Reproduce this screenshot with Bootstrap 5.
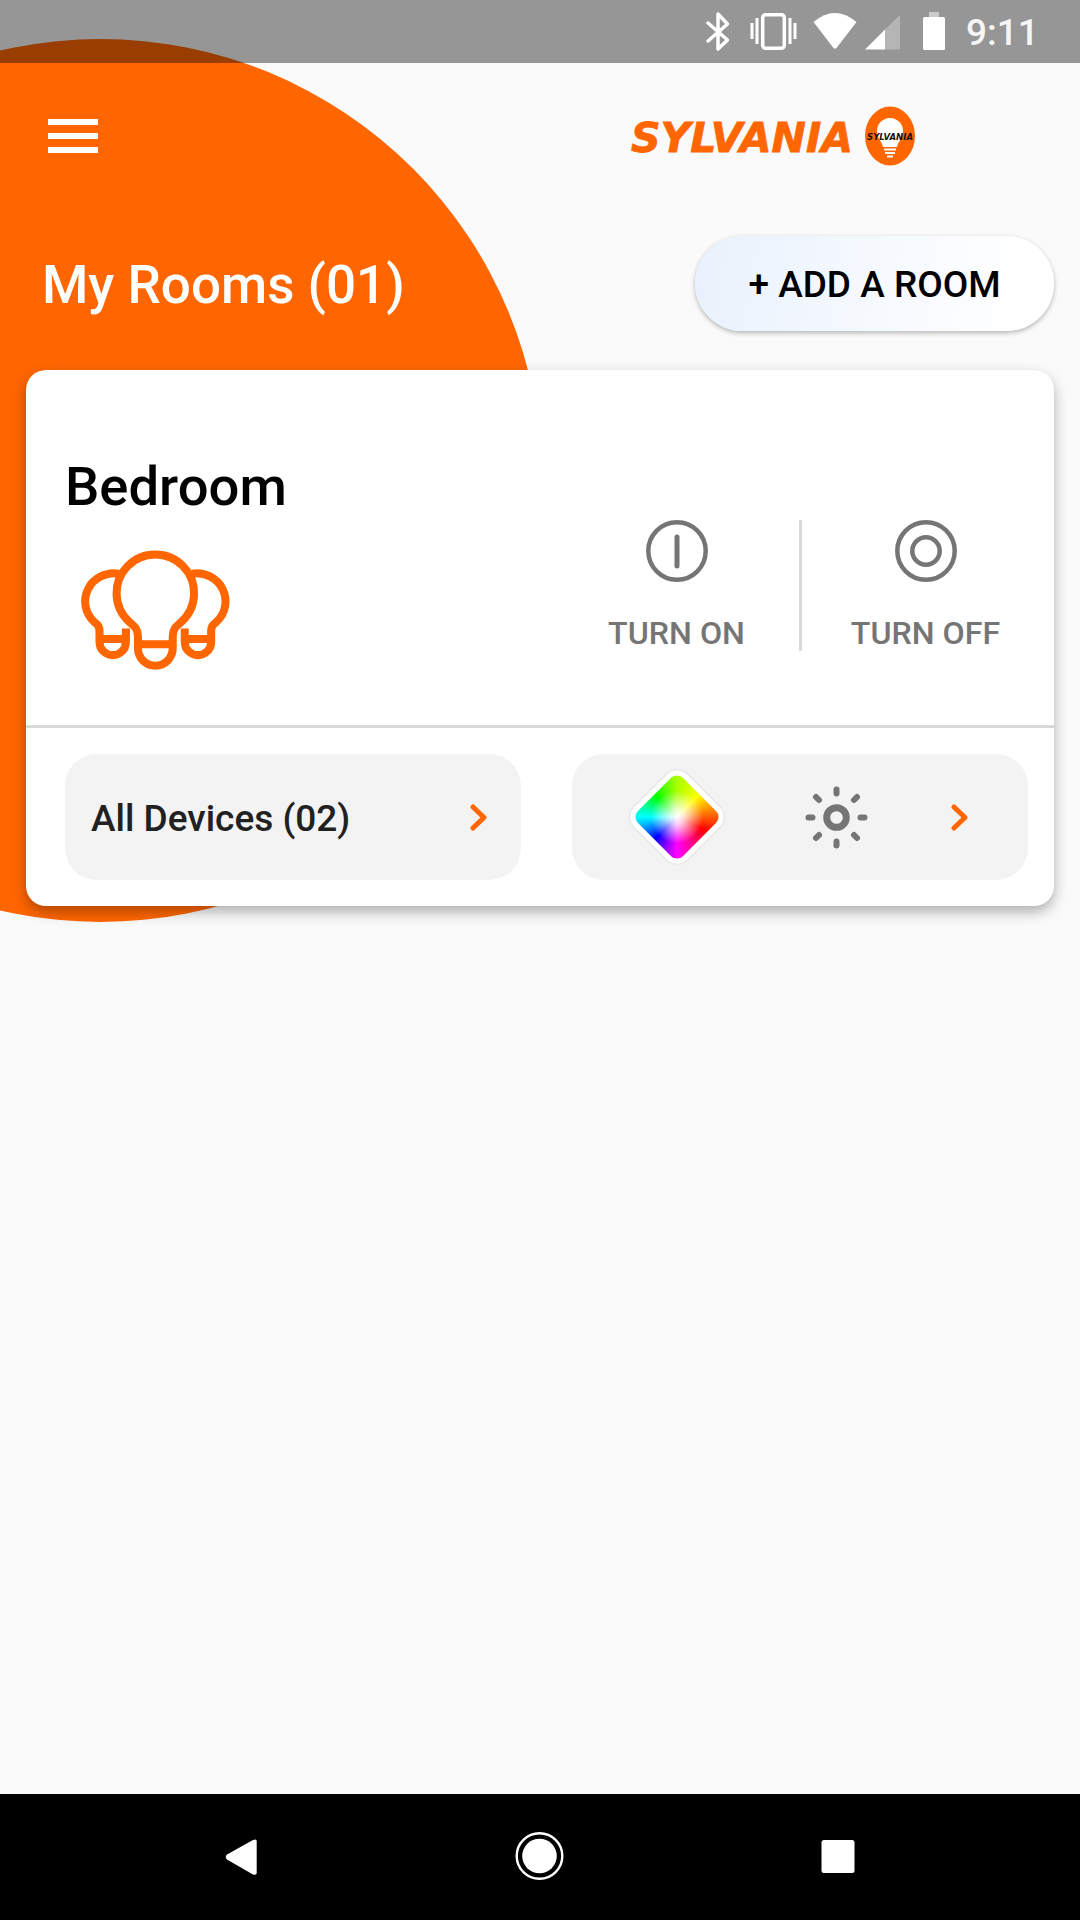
<!DOCTYPE html>
<html>
<head>
  <title>My Rooms</title>
  <meta charset="UTF-8">
  <link href="https://cdn.jsdelivr.net/npm/bootstrap@5.3.0/dist/css/bootstrap.min.css" rel="stylesheet">
  <style>
    body { background: #fafafa; font-family: Roboto, "Liberation Sans", sans-serif; }
    .phone { position: relative; width: 1080px; height: 1920px; overflow: hidden; background: #fafafa; }
    .blob { position: absolute; left: -341.5px; top: 38.5px; width: 883px; height: 883px; border-radius: 50%; background: #ff6600; }
    .status-strip { position: relative; height: 63px; background: rgba(0,0,0,.4); color: #fff; padding-right: 47px; }
    .status-strip svg { height: 63px; display: block; }
    .clock { font-size: 37px; font-weight: 500; line-height: 66px; width: 67px; margin-left: 21px; color: #f6f6f6; white-space: nowrap; }
    .page-main { position: relative; }
    .top-row { height: 173px; }
    .burger { width: 49.5px; margin: 56px 0 0 48px; }
    .burger span { display: block; height: 5.5px; background: #fff; margin-bottom: 8.6px; }
    .brand { margin: 42px 155px 0 0; }
    .title-row { height: 95px; padding: 0 26px 0 42px; }
    .room-title { font-size: 53px; font-weight: 500; color: #fff; margin: 0; line-height: 1; padding-top: 3px; }
    .add-btn { width: 359px; height: 95px; border-radius: 48px; border: 0; background: linear-gradient(100deg, #e8f1fc 0%, #f2f7fe 35%, #ffffff 90%); box-shadow: 0 2px 5px rgba(0,0,0,.28); font-size: 37px; font-weight: 500; color: #000; padding: 2px 0 0; }
    .room-card { margin: 39px 26px 0; height: 536px; border: 0; border-radius: 20px; box-shadow: 0 6px 14px rgba(0,0,0,.3); }
    .card-top { height: 358px; border-bottom: 3px solid #d9d9d9; padding-right: 5px; }
    .room-name { font-size: 54.4px; font-weight: 500; color: #000; line-height: 1; margin: 0 0 0 39px; padding-top: 90px; }
    .bulbs { display: block; margin: 36px 0 0 53px; }
    .acts { padding-top: 150px; }
    .act { width: 245px; color: #757575; font-size: 32.2px; font-weight: 500; text-align: center; height: 131px; white-space: nowrap; }
    .act + .act { border-left: 3px solid #d9d9d9; width: 250px; }
    .act svg { display: block; margin: 0 auto 32px; }
    .act div { line-height: 1.2; }
    .card-bottom { padding: 26px 26px 0 39px; gap: 51px; }
    .pill-box { width: 456px; height: 126px; border-radius: 32px; background: #f3f3f3; }
    .pill-left { padding: 0 34px 0 26px; font-size: 37px; font-weight: 500; color: #212121; }
    .pill-left span { padding-top: 3px; }
    .swatch-wrap { width: 93px; height: 93px; margin-left: 58px; display: flex; align-items: center; justify-content: center; }
    .swatch { width: 74px; height: 74px; flex: none; border-radius: 14px; border: 5px solid #fff; transform: rotate(45deg); box-shadow: 0 0 3px rgba(0,0,0,.15); background: radial-gradient(circle, #fff 0%, rgba(255,255,255,.8) 16%, rgba(255,255,255,0) 58%), conic-gradient(from -45deg, #a8ff00 0deg, #ffff00 45deg, #ff0000 115deg, #ff00ff 180deg, #0000ff 225deg, #00ffff 270deg, #00ff00 315deg, #a8ff00 360deg); }
    .sun { margin-right: 83px; }
    .nav-strip { position: absolute; left: 0; right: 0; bottom: 0; height: 126px; background: #000; }
    .nav-strip svg { display: block; }
  </style>
</head>
<body>
<div class="phone">
  <div class="blob"></div>

  <!-- Status bar -->
  <div class="status-strip d-flex justify-content-end">
    <svg width="23" viewBox="706 0 23 63"><path d="M708 23 L727.500 40 L718 49 V14 L727.500 24 L708 41" fill="none" stroke="#fff" stroke-width="3.500" stroke-linecap="round" stroke-linejoin="round"/></svg>
    <svg width="47" viewBox="750 0 47 63" style="margin-left:21px"><rect x="762.700" y="14.700" width="21.600" height="33.600" rx="3" fill="none" stroke="#fff" stroke-width="3.500"/><path d="M752 23V39M757 18V44M790 18V44M795 23V39" stroke="#fff" stroke-width="3" fill="none"/></svg>
    <svg width="44" viewBox="813 0 44 63" style="margin-left:16px"><path d="M813.500 22 Q835 4 856.500 22 L836.500 48 Q835 49.500 833.500 48 Z" fill="#fff"/></svg>
    <svg width="35" viewBox="865 0 35 63" style="margin-left:8px"><polygon points="865,49.500 885,29.500 885,49.500" fill="#fff"/><polygon points="885,29.500 900,15 900,49.500 885,49.500" fill="#fff" fill-opacity=".3"/></svg>
    <svg width="22" viewBox="923 0 22 63" style="margin-left:23px"><path d="M929 17V12H939V17Z" fill="#fff" fill-opacity=".5"/><rect x="923" y="17" width="22" height="33" rx="1.500" fill="#fff"/></svg>
    <div class="clock text-end">9:11</div>
  </div>

  <div class="page-main">
    <!-- Menu and logo -->
    <div class="top-row d-flex justify-content-between">
      <div class="burger"><span></span><span></span><span></span></div>
      <svg class="brand" width="300" height="62" viewBox="625 105 300 62">
        <text x="631" y="152" font-family="DejaVu Sans" font-weight="700" font-style="italic" font-size="40" fill="#ff6600" stroke="#ff6600" stroke-width=".8" textLength="222" lengthAdjust="spacingAndGlyphs">SYLVANIA</text>
        <ellipse cx="890" cy="136" rx="25" ry="29.500" fill="#ff6600"/>
        <path d="M883 147 C882 141 877 139 877 131 A13 13 0 0 1 903 131 C903 139 898 141 897 147 Z" fill="#fff"/>
        <path d="M884 149.500H896M885 153H895M887 156.500H893" stroke="#fff" stroke-width="2"/>
        <text x="867" y="140" font-family="DejaVu Sans" font-weight="700" font-style="italic" font-size="8.500" fill="#111" textLength="46" lengthAdjust="spacingAndGlyphs">SYLVANIA</text>
      </svg>
    </div>

    <div class="title-row d-flex justify-content-between align-items-center">
      <h1 class="room-title">My Rooms (01)</h1>
      <button class="btn add-btn">+ ADD A ROOM</button>
    </div>

    <!-- Room card -->
    <div class="card room-card">
      <div class="card-top d-flex justify-content-between">
        <div>
          <h2 class="room-name">Bedroom</h2>
          <svg class="bulbs" width="154" height="122" viewBox="120 330 460 365" fill="none" stroke="#ff6600" stroke-width="24" stroke-linejoin="round">
            <path d="M296 624 V590 C296 565 285 558 270 545 A116 116 0 1 1 426 545 C411 558 400 565 400 590 V624 A52 52 0 0 1 296 624 Z M296 612 H400"/>
            <path d="M238 401 A86 84 0 0 0 165 545 C178 555 181 560 181 575 V605 A39.500 39.500 0 0 0 260 605 V565 M181 596 H260"/>
            <path d="M458 401 A86 84 0 0 1 531 545 C518 555 515 560 515 575 V605 A39.500 39.500 0 0 1 436 605 V565 M515 596 H436"/>
          </svg>
        </div>
        <div class="acts d-flex">
          <div class="act">
            <svg width="62" height="62" viewBox="0 0 62 62" fill="none" stroke="#757575" stroke-width="4.500"><circle cx="31" cy="31" r="28.700"/><path d="M31 17V46" stroke-width="5" stroke-linecap="round"/></svg>
            <div>TURN ON</div>
          </div>
          <div class="act">
            <svg width="62" height="62" viewBox="0 0 62 62" fill="none" stroke="#757575" stroke-width="4.500"><circle cx="31" cy="31" r="28.700"/><circle cx="31" cy="31" r="13.700"/></svg>
            <div>TURN OFF</div>
          </div>
        </div>
      </div>
      <div class="card-bottom d-flex">
        <div class="pill-box pill-left d-flex justify-content-between align-items-center">
          <span>All Devices (02)</span>
          <svg width="17" height="27" viewBox="0 0 17 27" fill="none" stroke="#ff6600" stroke-width="5" stroke-linecap="round" stroke-linejoin="round"><path d="M3 3L14 13.500L3 24"/></svg>
        </div>
        <div class="pill-box d-flex align-items-center">
          <div class="swatch-wrap"><div class="swatch"></div></div>
          <svg class="sun ms-auto" width="63" height="63" viewBox="-31.500 -31.500 63 63" fill="none" stroke="#757575" stroke-width="6" stroke-linecap="round">
            <circle r="9.800" stroke-width="7"/>
            <path d="M0 -28V-24M0 24V28M-28 0H-24M24 0H28M-20.500 -20.500L-17.500 -17.500M17.500 17.500L20.500 20.500M20.500 -20.500L17.500 -17.500M-17.500 17.500L-20.500 20.500"/>
          </svg>
          <svg width="17" height="27" viewBox="0 0 17 27" fill="none" stroke="#ff6600" stroke-width="5" stroke-linecap="round" stroke-linejoin="round" style="margin-right:60px"><path d="M3 3L14 13.500L3 24"/></svg>
        </div>
      </div>
    </div>
  </div>

  <!-- Android nav -->
  <div class="nav-strip">
    <svg width="1080" height="126" viewBox="0 1794 1080 126">
      <path d="M253 1840 L227 1854.500 Q224.500 1857 227 1859.500 L253 1874.500 Q256.700 1875.500 256.700 1873 V1841 Q256.700 1838.500 253 1840Z" fill="#fff"/>
      <circle cx="539.500" cy="1856" r="22.800" fill="none" stroke="#fff" stroke-width="2.400"/>
      <circle cx="539.500" cy="1856" r="17.300" fill="#fff"/>
      <rect x="821.500" y="1840" width="33" height="33" rx="2.500" fill="#fff"/>
    </svg>
  </div>
</div>
</body>
</html>
